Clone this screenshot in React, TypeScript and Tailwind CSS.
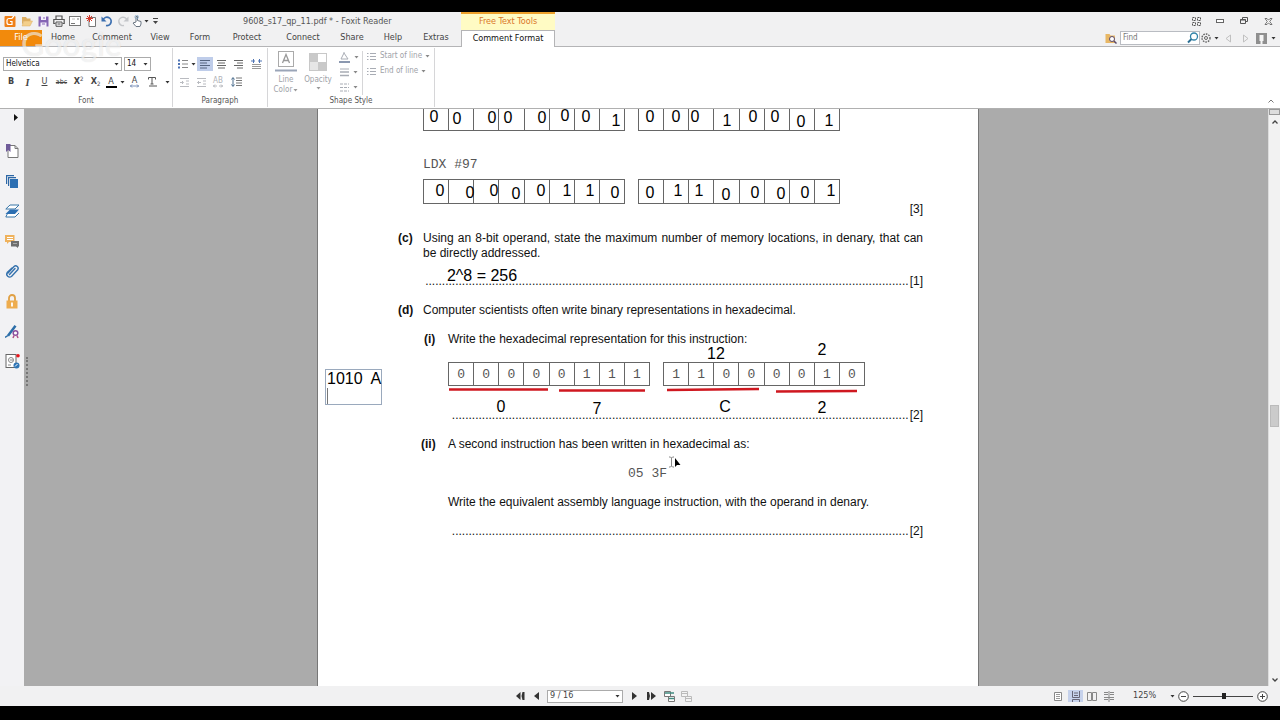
import React from "react";

type Note = { t: string; x: number; y: number };

/* Free text annotations: centre of each one in page coordinates */
const notes: Note[] = [
  ...[[116, 8], [139, 10], [174, 9], [190, 9], [224, 9], [247, 7], [268, 8]].map(([x, y]) => ({ t: "0", x, y })),
  { t: "1", x: 298, y: 12 },
  { t: "0", x: 332, y: 8 }, { t: "0", x: 358, y: 8 }, { t: "0", x: 377, y: 8 }, { t: "1", x: 409, y: 12 },
  { t: "0", x: 435, y: 8 }, { t: "0", x: 457, y: 8 }, { t: "0", x: 483, y: 13 }, { t: "1", x: 511, y: 12 },
  { t: "0", x: 122, y: 82 }, { t: "0", x: 152, y: 84 }, { t: "0", x: 176, y: 82 }, { t: "0", x: 198, y: 85 },
  { t: "0", x: 223, y: 82 }, { t: "1", x: 249, y: 82 }, { t: "1", x: 272, y: 82 }, { t: "0", x: 297, y: 84 },
  { t: "0", x: 332, y: 84 }, { t: "1", x: 360, y: 82 }, { t: "1", x: 381, y: 82 }, { t: "0", x: 408, y: 86 },
  { t: "0", x: 437, y: 84 }, { t: "0", x: 463, y: 85 }, { t: "0", x: 487, y: 84 }, { t: "1", x: 513, y: 82 },
  { t: "2^8 = 256", x: 164, y: 167 },
  { t: "12", x: 398, y: 245 }, { t: "2", x: 504, y: 241 },
  { t: "0", x: 183, y: 298 }, { t: "7", x: 279, y: 300 }, { t: "C", x: 407, y: 298 }, { t: "2", x: 504, y: 299 },
];

function Svg({ w, h, children }: { w: number; h: number; children: React.ReactNode }) {
  return (
    <svg width={w} height={h} viewBox={`0 0 ${w} ${h}`} fill="none" className="shrink-0" aria-hidden="true">
      {children}
    </svg>
  );
}

function Caret({ c = "#333" }: { c?: string }) {
  return <Svg w={5} h={3}><path d="M.5 0h4L2.500 2.500z" fill={c} /></Svg>;
}

function Btn({ label, className, children }: { label: string; className: string; children: React.ReactNode }) {
  return (
    <button type="button" aria-label={label} className={`flex shrink-0 items-center justify-center ${className}`}>
      {children}
    </button>
  );
}

function Lines({ rows, c = "#666" }: { rows: number[][]; c?: string }) {
  return (
    <Svg w={11} h={11}>
      {rows.map(([a, b], i) => <path key={i} d={`M${a} ${1.5 + i * 2.5}H${b}`} stroke={c} />)}
    </Svg>
  );
}

function TitleBar() {
  return (
    <header className="flex h-[18px] shrink-0 items-center bg-[#f1f1f2]">
      <div className="flex w-[243px] shrink-0 items-center pl-px">
        <Btn label="Foxit Reader" className="w-[17px]">
          <Svg w={12} h={12}><rect x="0.500" y="1" width="11" height="11" rx="1" fill="#ef8018" /><path d="M8.500 3.500H5a2 2 0 0 0-2 2v2a2 2 0 0 0 2 2h3V6.500H6M8 3l2-2" stroke="#fff" strokeWidth="1.200" /></Svg>
        </Btn>
        <Btn label="Open" className="w-[17px]">
          <Svg w={12} h={12}><path d="M1 2h4l1 1.500h3.500V6H3L1 10z" fill="#dcae62" /><path d="M3.200 6H11.500L9 11H1z" fill="#f3cf8b" stroke="#dcae62" strokeWidth=".5" /></Svg>
        </Btn>
        <Btn label="Save" className="w-4">
          <Svg w={11} h={11}><path d="M.5.5h10v10H.5z" fill="#8464b4" /><path d="M3 0h5v4H3zM2.500 6.500h6V11h-6z" fill="#f4f0fa" /><path d="M6 1v2M4 8h3" stroke="#8464b4" /></Svg>
        </Btn>
        <Btn label="Print" className="w-4">
          <Svg w={12} h={12}><path d="M3 4V1h6v3M2.500 8.500H.8v-4h10.400v4H9.500" stroke="#555" strokeWidth="1.200" /><path d="M3 7h6v4.300H3zM4.500 9h3" stroke="#555" /></Svg>
        </Btn>
        <Btn label="E-mail" className="w-4">
          <Svg w={12} h={10}><rect x=".5" y=".5" width="11" height="9" fill="#fff" stroke="#777" /><path d="M2 7.500h4M8 3h2" stroke="#777" /><path d="M3 3h3" stroke="#bbb" /></Svg>
        </Btn>
        <Btn label="New" className="w-4">
          <Svg w={11} h={12}><path d="M3 2.500h6.500v9H3z" fill="#fff" stroke="#777" /><path d="M3.500 0v7M0 3.500h7M1 1l5 5M6 1L1 6" stroke="#d43a2c" /></Svg>
        </Btn>
        <Btn label="Undo" className="w-4">
          <Svg w={12} h={12}><path d="M2 5a4.200 4.200 0 1 1 3 5.500" stroke="#3b6fb0" strokeWidth="1.700" /><path d="M.5 1.500v5h5z" fill="#3b6fb0" /></Svg>
        </Btn>
        <Btn label="Redo" className="w-4">
          <Svg w={12} h={12}><path d="M10 5a4.200 4.200 0 1 0-3 5.500" stroke="#c4c6c9" strokeWidth="1.500" /><path d="M11.500 1.500v5h-5z" fill="#c4c6c9" /></Svg>
        </Btn>
        <Btn label="Hand tool" className="w-[18px] gap-px">
          <Svg w={11} h={12}><path d="M4 7V1.500h1.500V5.500L9 6.500V9L8 11.500H4L1 8z" fill="#fff" stroke="#6b7683" /><circle cx="4.700" cy="2" r="1.800" stroke="#7fa8c8" strokeWidth=".7" /></Svg>
          <Caret />
        </Btn>
        <Btn label="Customize quick access" className="w-3">
          <Svg w={5} h={6}><path d="M0 .5h5" stroke="#444" /><path d="M0 3h5L2.500 6z" fill="#444" /></Svg>
        </Btn>
      </div>
      <h1 className="w-[218px] shrink-0 text-[9px] leading-3 whitespace-nowrap text-[#555]">9608_s17_qp_11.pdf * - Foxit Reader</h1>
      <div className="flex h-full w-[94px] shrink-0 items-center justify-center border-t-2 border-[#eda02c] bg-[#fffbc4] text-[9px] text-[#d9762a]">Free Text Tools</div>
      <div className="ml-auto flex items-center">
        <Btn label="Full screen" className="w-6"><Svg w={9} h={9}><path d="M.5.5h3v3h-3zM5.500.5h3v3h-3zM.5 5.500h3v3h-3zM5.500 5.500h3v3h-3z" stroke="#555" strokeDasharray="2 1" /></Svg></Btn>
        <Btn label="Minimize" className="w-6"><Svg w={8} h={4}><rect x=".5" y=".5" width="7" height="3" fill="#fff" stroke="#666" /></Svg></Btn>
        <Btn label="Restore" className="w-6"><Svg w={8} h={8}><path d="M2.500 2.500v-2h5v4h-2M.5 2.500h5v4h-5z" stroke="#555" /><path d="M0 3h6" stroke="#555" /></Svg></Btn>
        <Btn label="Close" className="w-6"><Svg w={9} h={7}><path d="M1 .5h2l1.500 1.700L6 .5h2L5.700 3.500 8 6.500H6L4.500 4.800 3 6.500H1l2.300-3z" fill="#fff" stroke="#555" strokeWidth=".8" /></Svg></Btn>
      </div>
    </header>
  );
}

const tabs: [string, string][] = [
  ["Home", "w-[42px]"], ["Comment", "w-14"], ["View", "w-10"], ["Form", "w-10"], ["Protect", "w-[54px]"],
  ["Connect", "w-[58px]"], ["Share", "w-10"], ["Help", "w-[42px]"], ["Extras", "w-[44px]"],
];

function TabBar() {
  return (
    <nav className="relative flex h-[17px] shrink-0 items-stretch border-b border-[#b4b4b6] bg-[#f1f1f2] text-[9px] text-[#444]">
      <button type="button" className="w-[42px] shrink-0 bg-[#f28a0c] text-white">File</button>
      {tabs.map(([t, w]) => <button key={t} type="button" className={`${w} shrink-0 whitespace-nowrap`}>{t}</button>)}
      <button type="button" className="-mb-px ml-[3px] w-[94px] shrink-0 border border-b-0 border-[#b4b4b6] bg-white whitespace-nowrap text-[#111]">Comment Format</button>
      <div className="ml-auto flex items-center pr-1">
        <Btn label="Search folder" className="w-4">
          <Svg w={12} h={11}><path d="M.5 1h4l1 1.500H10V10H.5z" fill="#e8b765" /><circle cx="7" cy="6" r="2.500" fill="#fff" stroke="#5b4a6b" /><path d="M9 8l2.500 2.500" stroke="#5b4a6b" strokeWidth="1.500" /></Svg>
        </Btn>
        <label className="ml-px flex h-[14px] w-20 items-center border border-[#b9bcc2] bg-white">
          <input type="text" placeholder="Find" aria-label="Find" className="w-0 flex-1 pl-[2px] text-[8px] leading-3 outline-none placeholder:text-[#777]" />
          <Svg w={12} h={12}><circle cx="7" cy="4.500" r="3.500" stroke="#3183a8" strokeWidth="1.300" /><path d="M4.500 7L1 10.500" stroke="#2c6f94" strokeWidth="2" /></Svg>
        </label>
        <Btn label="Settings" className="w-5 gap-[3px]">
          <Svg w={10} h={10}><circle cx="5" cy="5" r="4" stroke="#666" strokeWidth="1.400" strokeDasharray="1.600 1" /><circle cx="5" cy="5" r="1.500" stroke="#666" /></Svg><Caret />
        </Btn>
        <Btn label="Previous" className="w-4"><Svg w={6} h={9}><path d="M5.500 1v7L1 4.500z" stroke="#c0c0c0" /></Svg></Btn>
        <Btn label="Next" className="w-5"><Svg w={6} h={9}><path d="M.5 1v7L5 4.500z" stroke="#c0c0c0" /></Svg></Btn>
        <Btn label="Account" className="w-5 gap-[4px]">
          <Svg w={11} h={11}><path d="M0 0h11v11H0z" fill="#8f8f8f" /><path d="M3.500 2h4v6h-1v3h-2V8h-1z" fill="#f4f4f4" /></Svg><Caret />
        </Btn>
      </div>
      <span className="pointer-events-none absolute top-[-4px] left-[21px] text-[32px] leading-[36px] font-medium text-white/60 [font-family:Lato,sans-serif] [text-shadow:0_0_1px_rgba(0,0,0,0.12)]">Google</span>
    </nav>
  );
}

function Group({ title, width, children }: { title: string; width: string; children: React.ReactNode }) {
  return (
    <section className={`flex shrink-0 flex-col justify-between border-r border-[#d6d6d8] ${width}`}>
      <div>{children}</div>
      <h2 className="text-center text-[8px] leading-3 text-[#555]">{title}</h2>
    </section>
  );
}

function Ribbon() {
  const g = "#a8acb4";
  return (
    <div className="flex h-[62px] shrink-0 border-b border-[#b0b0b0] bg-white py-px">
      <Group title="Font" width="w-[173px]">
        <div className="mt-[9px] flex h-[14px] gap-[2px] pl-[3px] text-[8px] text-[#111]">
          <div className="flex w-[119px] items-center border border-[#ababab] pr-[2px]">
            <select aria-label="Font family" className="w-0 flex-1 appearance-none pl-[2px] outline-none"><option>Helvetica</option></select><Caret />
          </div>
          <div className="flex w-[27px] items-center border border-[#ababab] pr-[2px]">
            <select aria-label="Font size" className="w-0 flex-1 appearance-none pl-[2px] outline-none"><option>14</option></select><Caret />
          </div>
        </div>
        <div className="mt-[3px] flex h-4 items-center pl-[3px] text-[9px] text-[#444]">
          <Btn label="Bold" className="w-4 font-bold">B</Btn>
          <Btn label="Italic" className="w-[17px] text-[10px] font-bold italic [font-family:'Liberation_Serif',serif]">I</Btn>
          <Btn label="Underline" className="w-[17px] underline">U</Btn>
          <Btn label="Strikethrough" className="w-[17px] text-[7px] line-through">abc</Btn>
          <Btn label="Superscript" className="w-[17px]"><b>X</b><sup className="text-[6px]">2</sup></Btn>
          <Btn label="Subscript" className="w-[17px]"><b>X</b><sub className="text-[6px]">2</sub></Btn>
          <Btn label="Font color" className="w-[22px] gap-[3px]">
            <span className="flex h-3 w-[11px] items-center justify-center border-b-2 border-black leading-[10px]">A</span><Caret />
          </Btn>
          <Btn label="Character spacing" className="w-[17px]">
            <span className="flex flex-col items-center leading-[8px]">A<Svg w={9} h={4}><path d="M0 2h9M2 .5L.5 2 2 3.500M7 .5L8.500 2 7 3.500" stroke="#6d86b0" strokeWidth=".9" /></Svg></span>
          </Btn>
          <Btn label="Text scale" className="w-[28px] gap-2 pl-1">
            <Svg w={9} h={10}><path d="M.5 2.500v-2h7v2M4 .5v6.500M2.500 7h3M1 9h8" stroke="#555" /></Svg><Caret />
          </Btn>
        </div>
      </Group>
      <Group title="Paragraph" width="w-[95px]">
        <div className="mt-[9px] flex h-[14px] items-center pl-1">
          <Btn label="Bullets" className="w-5 gap-[3px]">
            <Svg w={10} h={10}><path d="M0 1.500h2M0 5h2M0 8.500h2" stroke="#4f74b5" strokeWidth="2" /><path d="M4 1.500h6M4 5h6M4 8.500h6" stroke="#888" /></Svg><Caret />
          </Btn>
          <Btn label="Align left" className="h-[14px] w-4 bg-[#bfcdea]"><Lines rows={[[0, 10], [0, 7], [0, 10], [0, 7]]} c="#56657f" /></Btn>
          <Btn label="Align center" className="w-[17px]"><Lines rows={[[1, 10], [2, 9], [1, 10], [2, 9]]} /></Btn>
          <Btn label="Align right" className="w-[17px]"><Lines rows={[[1, 10], [4, 10], [1, 10], [4, 10]]} /></Btn>
          <Btn label="Justify" className="w-[18px]">
            <Svg w={11} h={10}><path d="M0 2h4M7 2h4M2.500 0v4M8.500 0v4" stroke="#4f74b5" /><path d="M1 5.500h9M1 7.500h9M1 9.500h9" stroke="#999" /></Svg>
          </Btn>
        </div>
        <div className="mt-[3px] flex h-4 items-center pl-[3px]">
          <Btn label="Decrease indent" className="w-[17px]"><Svg w={9} h={9}><path d="M0 .5h9M0 8.500h9M0 4.500h3M2 3l1.500 1.500L2 6M6 3h3M6 6h3" stroke="#b9bbc0" /></Svg></Btn>
          <Btn label="Increase indent" className="w-[17px]"><Svg w={9} h={9}><path d="M0 .5h9M0 8.500h9M4 4.500H.5M2 3L.5 4.500 2 6M6 3h3M6 6h3" stroke="#b9bbc0" /></Svg></Btn>
          <Btn label="Word spacing" className="w-[16px] text-[8px] text-[#b0b2b8]"><span className="flex flex-col items-center leading-[7px]">AB<Svg w={10} h={4}><path d="M0 2h4M6 2h4M2 .5L.5 2 2 3.500M8 .5L9.500 2 8 3.500" stroke="#b0b2b8" strokeWidth=".9" /></Svg></span></Btn>
          <Btn label="Line spacing" className="w-[21px]">
            <Svg w={11} h={10}><path d="M2 1v8M.5 2.500L2 .5l1.500 2M.5 7.500L2 9.500l1.500-2" stroke="#4d6f8f" /><path d="M5 1h6M5 3.500h6M5 6h6M5 8.500h6" stroke="#777" /></Svg>
          </Btn>
        </div>
      </Group>
      <Group title="Shape Style" width="w-[167px]">
        <div className="flex h-[47px] pt-[3px] text-[8px] leading-[10px] text-[#a0a2a7]">
          <button type="button" className="flex w-9 shrink-0 flex-col items-center">
            <Svg w={22} h={21}><rect x="3.500" y=".5" width="15" height="15" stroke="#aaa" /><path d="M7.500 12L11 3.500 14.500 12M8.800 9.500h4.400" stroke="#999" strokeWidth="1.300" /><path d="M0 19.500h22" stroke="#9aa5b8" strokeWidth="2" /></Svg>
            <span className="mt-[3px]">Line</span>
            <span className="flex items-center gap-px">Color<Caret c="#999" /></span>
          </button>
          <button type="button" className="flex w-7 shrink-0 flex-col items-center">
            <Svg w={18} h={21}><rect x=".5" y="2.500" width="17" height="17" fill="#e6e6e6" stroke="#c8c8c8" /><path d="M1 3h8v8H1zM9 11h8v8H9z" fill="#c9c9c9" /><path d="M9 3h8v8H9z" fill="#fff" /></Svg>
            <span className="mt-[3px]">Opacity</span>
            <span className="flex h-[7px] items-center"><Caret c="#999" /></span>
          </button>
          <div className="ml-1 flex w-[26px] shrink-0 flex-col items-center gap-[3px]">
            <Btn label="Fill color" className="h-3 gap-1"><Svg w={11} h={11}><path d="M2 7L5 1l4 6zM5 1v-1" stroke={g} /><path d="M0 10h11" stroke="#8b98b0" strokeWidth="2" /></Svg><Caret c="#888" /></Btn>
            <Btn label="Line width" className="h-3 gap-1"><Svg w={9} h={9}><path d="M0 1h9" stroke={g} /><path d="M0 4h9M0 7.500h9" stroke={g} strokeWidth="1.500" /></Svg><Caret c="#888" /></Btn>
            <Btn label="Line style" className="h-3 gap-1"><Svg w={9} h={9}><path d="M0 1h9M0 4.500h9M0 8h9" stroke={g} strokeDasharray="3 1" /></Svg><Caret c="#888" /></Btn>
          </div>
          <div className="flex h-11 flex-col gap-[5px] border-l border-[#d6d6d8] pl-1 whitespace-nowrap">
            {["Start of line", "End of line"].map((t) => (
              <button key={t} type="button" className="flex items-center gap-[3px]">
                <Svg w={10} h={9}><path d="M3 1.500h6M3 4.500h6M3 7.500h6M0 1.500h1.500M0 4.500h1.500M0 7.500h1.500" stroke={g} /></Svg>
                {t}
                <Caret c="#888" />
              </button>
            ))}
          </div>
        </div>
      </Group>
      <button type="button" aria-label="Collapse ribbon" className="mr-[6px] mb-1 ml-auto self-end"><Svg w={6} h={4}><path d="M.5 3.500L3 1l2.500 2.500" stroke="#777" /></Svg></button>
    </div>
  );
}

const sideIcons: [string, React.ReactNode][] = [
  ["Bookmarks", <><path d="M3 1.500h7l3 3v9H3z" fill="#fff" stroke="#777" /><path d="M10 1.500v3h3" stroke="#777" /><path d="M1 0h4.500v8L3.200 6 1 8z" fill="#6f5b99" /></>],
  ["Pages", <><path d="M1 10V1h8v1.200H2.200V10zM3 12V3h8v1.200H4.200V12z" fill="#2d67a5" /><path d="M5 5h8v9H5z" fill="#2c6fb2" /></>],
  ["Layers", <><path d="M5 1h9l-4 4H.8z" fill="#fff" stroke="#3976a8" /><path d="M2.500 9.500L.8 13H10l4-4" fill="#fff" stroke="#3976a8" /><path d="M5 5.500h9l-4 4.500H.5z" fill="#2c6fb2" /></>],
  ["Comments", <><path d="M0 1h9.500v7H4L2 10V8H0z" fill="#efb25c" /><path d="M2 3.500h6M2 5.500h6" stroke="#fff" /><path d="M6 7h8v5.500h-1V14l-2-1.500H6z" fill="#6e6e6e" /><path d="M8 9.500h4" stroke="#aaa" /></>],
  ["Attachments", <path d="M3 9L9 2.500a2.500 2.500 0 0 1 3.700 3.300L6.500 12.500a3 3 0 0 1-4.300-4L7 4M4.500 10.500L10 4.500" stroke="#3572ad" strokeWidth="1.400" strokeLinecap="round" />],
  ["Security", <><path d="M4 7V4a3 3 0 0 1 6 0v3" stroke="#e0a044" strokeWidth="1.800" /><rect x="1.500" y="6.500" width="11" height="8" fill="#eeac4d" /><path d="M7 8.500v4" stroke="#fff" strokeWidth="1.800" /></>],
  ["Signatures", <><path d="M2 11L9.500 1l2 1.500L4 12.500z" fill="#2c6ea8" /><path d="M0 13.500l3-2" stroke="#2c6ea8" strokeWidth="1.500" /><circle cx="10.500" cy="9" r="2.300" fill="#fff" stroke="#8a4f9e" strokeWidth="1.500" /><path d="M9 11.500l-1 2.500M12 11.500l1 2.500" stroke="#b0508a" strokeWidth="1.500" /></>],
  ["Stamps", <><rect x="1" y=".5" width="10" height="13" fill="#fff" stroke="#666" /><circle cx="6" cy="6" r="2.500" stroke="#888" /><path d="M5 6h3M3 11h3" stroke="#888" /><circle cx="11.500" cy="11.500" r="3" fill="#2d74b5" /><path d="M10 12.500l2.500-2.500" stroke="#fff" /><circle cx="13" cy="1.800" r="1.800" fill="#e8151b" /></>],
];

function Sidebar() {
  return (
    <aside className="flex w-6 shrink-0 flex-col items-center bg-[#f2f2f4]">
      <button type="button" aria-label="Expand panel" className="ml-2 flex h-[27px] items-start pt-[5px]"><Svg w={4} h={7}><path d="M0 0l4 3.500L0 7z" fill="#111" /></Svg></button>
      {sideIcons.map(([n, d]) => <Btn key={n} label={n} className="h-[30px] w-full"><Svg w={15} h={15}>{d}</Svg></Btn>)}
    </aside>
  );
}

function Bits({ values, height, open = false }: { values?: string; height: string; open?: boolean }) {
  return (
    <table className={`w-[202px] table-fixed border-collapse ${height}`}>
      <tbody>
        <tr>
          {Array.from({ length: 8 }, (_, i) => (
            <td key={i} className={`border border-[#666] p-0 text-center text-[13px] leading-[15px] text-[#555] [font-family:'Liberation_Mono',monospace] ${open ? "border-t-0" : ""}`}>{values ? values[i] : ""}</td>
          ))}
        </tr>
      </tbody>
    </table>
  );
}

function AnswerLine({ marks, dots }: { marks: number; dots: number }) {
  return (
    <div className="flex justify-end gap-px whitespace-nowrap">
      <span aria-hidden="true">{".".repeat(dots)}</span>
      <span>[{marks}]</span>
    </div>
  );
}

function Page() {
  return (
    <article className="relative w-[662px] shrink-0 border-x border-[#777] bg-white pr-[55px] pl-20 text-[12px] leading-[15px] text-[#111] [font-family:'Liberation_Sans',sans-serif]">
      <div className="flex gap-[13px] pl-[25px]"><Bits height="h-[22px]" open /><Bits height="h-[22px]" open /></div>
      <p className="mt-[26px] pl-[25px] text-[13px] text-[#555] [font-family:'Liberation_Mono',monospace]">LDX #97</p>
      <div className="mt-[7px] flex h-[38px] gap-[13px] pl-[25px]">
        <Bits height="h-[25px]" /><Bits height="h-[25px]" />
        <span className="ml-auto self-end">[3]</span>
      </div>
      <section className="mt-[14px] grid grid-cols-[25px_1fr]">
        <b>(c)</b>
        <div>
          <p className="text-justify">Using an 8-bit operand, state the maximum number of memory locations, in denary, that can be directly addressed.</p>
          <div className="mt-[13px]"><AnswerLine marks={1} dots={145} /></div>
        </div>
      </section>
      <section className="mt-[14px] grid grid-cols-[25px_1fr]">
        <b>(d)</b>
        <div>
          <p>Computer scientists often write binary representations in hexadecimal.</p>
          <div className="mt-[14px] grid grid-cols-[25px_1fr]">
            <b className="pl-px">(i)</b>
            <div>
              <p>Write the hexadecimal representation for this instruction:</p>
              <div className="mt-[15px] flex gap-[13px]"><Bits values="00000111" height="h-[24px]" /><Bits values="11000010" height="h-[24px]" /></div>
              <div className="mt-[22px]"><AnswerLine marks={2} dots={137} /></div>
            </div>
          </div>
          <div className="mt-[14px] grid grid-cols-[25px_1fr]">
            <b className="-ml-[2px]">(ii)</b>
            <div>
              <p>A second instruction has been written in hexadecimal as:</p>
              <p className="mt-[14px] pl-[180px] text-[13px] text-[#555] [font-family:'Liberation_Mono',monospace]">05 3F</p>
              <p className="mt-[14px] whitespace-nowrap">Write the equivalent assembly language instruction, with the operand in denary.</p>
              <div className="mt-[14px]"><AnswerLine marks={2} dots={137} /></div>
            </div>
          </div>
        </div>
      </section>

      <div className="absolute inset-0 text-[16px] leading-[18px] text-black">
        {notes.map((n, i) => (
          <span key={i} className="absolute -translate-x-1/2 -translate-y-1/2 whitespace-nowrap" style={{ left: n.x, top: n.y }}>{n.t}</span>
        ))}
        <div className="absolute top-[260px] left-[7px] h-9 w-[57px] border border-[#9aa9bd] pl-px whitespace-pre">
          1010{"  "}A
          <span className="block h-4 w-px bg-[#777]" />
        </div>
        <svg className="absolute top-0 left-0" width="600" height="400" viewBox="0 0 600 400" fill="none" aria-hidden="true">
          <g stroke="#cf1820" strokeWidth="2.600">
            <path d="M131 280.500h99M241 281.500h86M349 281l92-1M458 282.500l81-.5" />
          </g>
          <path d="M351 348h1.500l1 1v8l-1 1H351M356 348h-1.500l-1 1v8l1 1h1.500" stroke="#888" />
          <path d="M357 349v9l2-2h3.500z" fill="#000" />
        </svg>
      </div>
    </article>
  );
}

function StatusBar() {
  const k = "#333";
  return (
    <footer className="flex h-5 shrink-0 items-center bg-[#f1f1f2] text-[9px] text-[#444]">
      <div className="ml-[512px] flex items-center">
        <Btn label="First page" className="w-4"><Svg w={9} h={8}><path d="M4.500 0v8L0 4zM8.500 0v8H6.500L5.500 4 6.500 0z" fill={k} /></Svg></Btn>
        <Btn label="Previous page" className="w-4"><Svg w={5} h={8}><path d="M5 0v8L0 4z" fill={k} /></Svg></Btn>
        <div className="mx-[3px] flex h-[13px] w-[76px] items-center border border-[#ababab] bg-white pr-[2px]">
          <select aria-label="Page" className="w-0 flex-1 appearance-none pl-[2px] outline-none"><option>9 / 16</option></select><Caret />
        </div>
        <Btn label="Next page" className="w-4"><Svg w={5} h={8}><path d="M0 0v8l5-4z" fill={k} /></Svg></Btn>
        <Btn label="Last page" className="w-[18px]"><Svg w={9} h={8}><path d="M4 0v8l5-4zM0 0h2l1 4-1 4H0z" fill={k} /></Svg></Btn>
        <Btn label="Previous view" className="w-[18px]"><Svg w={11} h={11}><path d="M.5.500h6v5h-6zM4.500 5.500h6v5h-6z" fill="#fff" stroke="#777" /><path d="M1 2h9M5 7.500h5" stroke="#3f8a80" strokeWidth="1.500" /></Svg></Btn>
        <Btn label="Next view" className="w-4"><Svg w={11} h={11}><path d="M.5.500h6v5h-6zM4.500 5.500h6v5h-6zM1 2.500h5M5 7.500h5" fill="#f4f4f4" stroke="#bbb" /></Svg></Btn>
      </div>
      <div className="ml-auto flex items-center pr-3">
        <Btn label="Single page" className="w-5"><Svg w={8} h={9}><path d="M.5.500h7v8h-7z" fill="#fff" stroke="#888" /><path d="M2 2.500h4M2 4.500h4M2 6.500h4" stroke="#999" /></Svg></Btn>
        <Btn label="Continuous" className="h-3 w-[15px] bg-[#c6d2ec]"><Svg w={8} h={11}><path d="M.5 0v6.500h7V0M.5 11V8.500h7V11M2 2h4M2 4.500h4" stroke="#667" /></Svg></Btn>
        <Btn label="Facing" className="w-[18px]"><Svg w={10} h={9}><path d="M.5.500h4v8h-4zM5.500.500h4v8h-4z" stroke="#888" /></Svg></Btn>
        <Btn label="Continuous facing" className="w-4"><Svg w={10} h={11}><path d="M5 0v11M0 1.500h4M0 3.500h4M6 1.500h4M6 3.500h4M0 6.500h10M0 8.500h4M6 8.500h4" stroke="#888" /></Svg></Btn>
        <button type="button" className="ml-4 flex w-[42px] items-center justify-between">125%<Caret /></button>
        <Btn label="Zoom out" className="ml-[3px] w-[11px]"><Svg w={11} h={11}><circle cx="5.500" cy="5.500" r="4.800" fill="#fff" stroke="#444" /><path d="M3 5.500h5" stroke="#444" /></Svg></Btn>
        <input type="range" aria-label="Zoom" min={0} max={100} defaultValue={52} className="mx-1 h-2 w-[60px] appearance-none bg-transparent bg-[linear-gradient(#444,#444)] bg-[length:100%_1px] bg-center bg-no-repeat [&::-webkit-slider-thumb]:h-[6px] [&::-webkit-slider-thumb]:w-[4px] [&::-webkit-slider-thumb]:appearance-none [&::-webkit-slider-thumb]:bg-[#222]" />
        <Btn label="Zoom in" className="w-[11px]"><Svg w={11} h={11}><circle cx="5.500" cy="5.500" r="4.800" fill="#fff" stroke="#444" /><path d="M3 5.500h5M5.500 3v5" stroke="#444" /></Svg></Btn>
      </div>
    </footer>
  );
}

export default function App() {
  return (
    <div className="flex h-screen flex-col overflow-hidden bg-black pt-3 pb-[14px] [font-family:'DejaVu_Sans_Condensed','Noto_Sans',sans-serif]">
      <TitleBar />
      <TabBar />
      <Ribbon />
      <div className="flex min-h-0 flex-1">
        <Sidebar />
        <main className="relative flex min-w-0 flex-1 justify-center overflow-hidden bg-[#ababab] pl-1">
          <Page />
          <span className="absolute top-[248px] left-[2px] h-[29px] border-l-2 border-dotted border-[#777]" />
        </main>
        <div className="flex w-3 shrink-0 flex-col items-center border-l border-[#ddd] bg-[#f2f2f2]">
          <span className="h-[6px] w-full shrink-0 border border-[#999] bg-[#ddd]" />
          <span className="mt-[5px]"><Svg w={6} h={4}><path d="M.5 3.500L3 1l2.500 2.500" stroke="#444" strokeWidth="1.300" /></Svg></span>
          <div className="flex w-full flex-1 flex-col px-px">
            <div className="h-0 grow-[113]" />
            <div className="h-[22px] border border-[#bbb] bg-[#cbcbcb]" />
            <div className="h-0 grow-[101]" />
          </div>
          <span className="mb-1"><Svg w={6} h={4}><path d="M.5.500L3 3 5.500.500" stroke="#444" strokeWidth="1.300" /></Svg></span>
        </div>
      </div>
      <StatusBar />
    </div>
  );
}
